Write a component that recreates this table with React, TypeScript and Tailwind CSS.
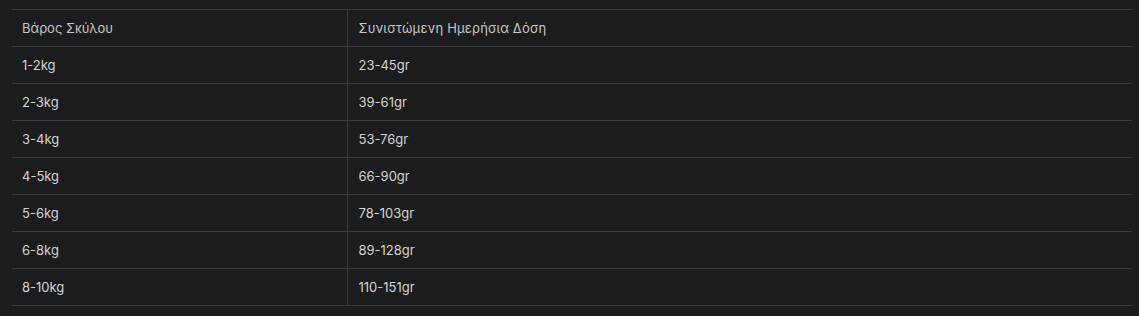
import React from "react";

const rows: [string, string][] = [
  ["1-2kg", "23-45gr"],
  ["2-3kg", "39-61gr"],
  ["3-4kg", "53-76gr"],
  ["4-5kg", "66-90gr"],
  ["5-6kg", "78-103gr"],
  ["6-8kg", "89-128gr"],
  ["8-10kg", "110-151gr"],
];

export default function App() {
  return (
    <div className="w-[1139px] h-[316px] bg-[#1b1c1e] pt-[9px] pl-[12px]" style={{ fontFamily: "Inter, 'Noto Sans', sans-serif" }}>
      <table className="w-[1120px] border-collapse text-[13px] leading-[16px] text-[#d6d4d0]">
        <thead>
          <tr className="h-[37px] border-y border-[#3a3b3d]">
            <th className="w-[335px] border-r border-[#3a3b3d] pl-[10px] text-left font-normal text-[#c9c7c3]">Βάρος Σκύλου</th>
            <th className="pl-[11px] text-left font-normal text-[#c9c7c3] tracking-[0.2px]">Συνιστώμενη Ημερήσια Δόση</th>
          </tr>
        </thead>
        <tbody>
          {rows.map(([a, b]) => (
            <tr key={a} className="h-[37px] border-b border-[#3a3b3d]">
              <td className="border-r border-[#3a3b3d] pl-[10px]">{a}</td>
              <td className="pl-[11px]">{b}</td>
            </tr>
          ))}
        </tbody>
      </table>
    </div>
  );
}
